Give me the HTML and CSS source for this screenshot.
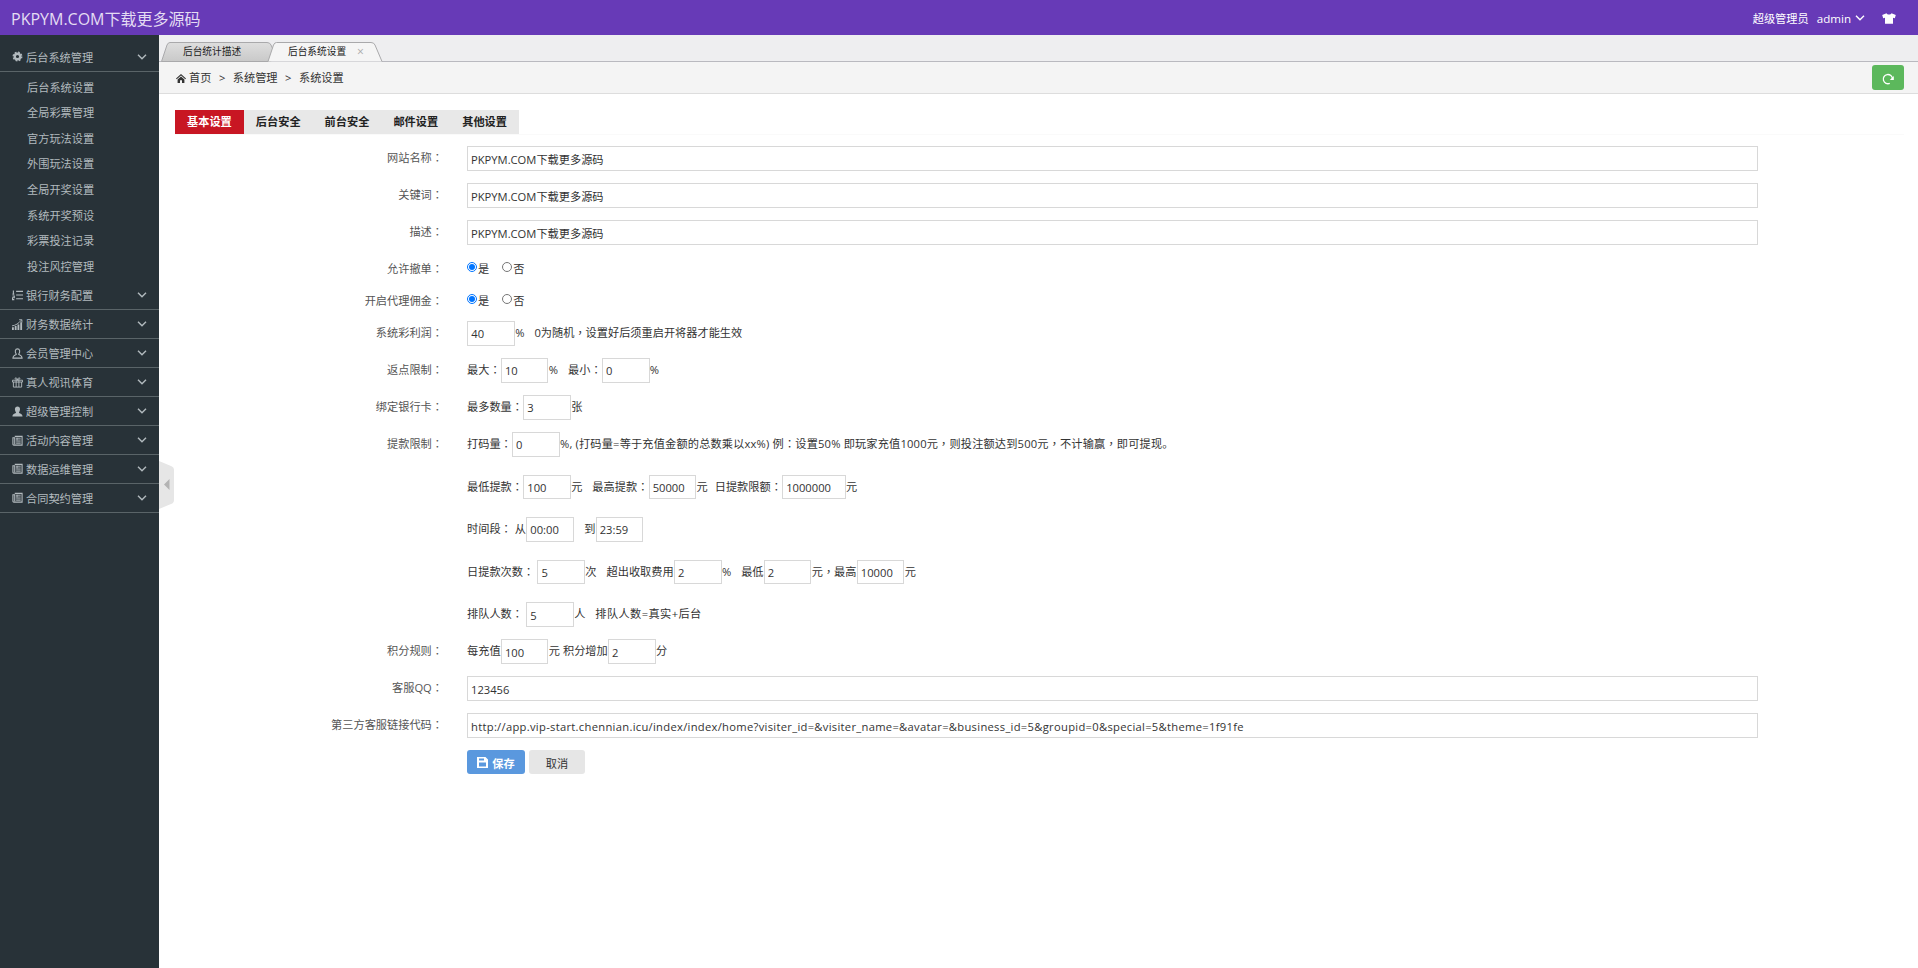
FILE: index.html
```html
<!DOCTYPE html>
<html lang="zh-CN">
<head>
    <meta charset="UTF-8">
    <meta name="viewport" content="width=device-width, initial-scale=1.0">
    <title>后台系统设置</title>
    <link rel="stylesheet" href="styles.css">
</head>
<body>
    <!-- shared icons -->
    <svg class="sprite">
        <symbol id="i-down" viewBox="0 0 10 6"><path d="M1 .8l4 4 4-4" fill="none" stroke="currentColor" stroke-width="1.4"/></symbol>
        <symbol id="i-news" viewBox="0 0 12 12"><path fill="none" stroke="currentColor" stroke-width="1.200" d="M3 1.500h8v9.500H2a1 1 0 0 1-1-1V3h2v7"/><path stroke="currentColor" d="M4.500 3.500h5M4.500 5.500h5M4.500 7.500h5M4.500 9h5M5.500 3v3"/></symbol>
    </svg>

    <header class="header">
        <div class="logo">PKPYM.COM下载更多源码</div>
        <div class="user">
            <span>超级管理员</span>
            <span class="name">admin</span>
            <svg class="down"><use href="#i-down"/></svg>
            <svg class="skin" viewBox="0 0 14 11"><path fill="#fff" d="M4.500.3C5 2 9 2 9.500.3L13.800 2l-1 3.300-1.800-.6V10.700H3V4.700l-1.800.6L.2 2z"/></svg>
        </div>
    </header>

    <div class="wrap">
        <aside class="sidebar">
            <div class="menu-title first">
                <svg class="icon" viewBox="0 0 12 12"><circle cx="6" cy="6" r="3" fill="none" stroke="currentColor" stroke-width="2.500"/><circle cx="6" cy="6" r="4.700" fill="none" stroke="currentColor" stroke-width="1.400" stroke-dasharray="2 1.690"/></svg>
                后台系统管理<svg class="down"><use href="#i-down"/></svg>
            </div>
            <ul class="submenu">
                <li>后台系统设置</li>
                <li>全局彩票管理</li>
                <li>官方玩法设置</li>
                <li>外围玩法设置</li>
                <li>全局开奖设置</li>
                <li>系统开奖预设</li>
                <li>彩票投注记录</li>
                <li>投注风控管理</li>
            </ul>
            <div class="menu-title">
                <svg class="icon" viewBox="0 0 12 12"><path stroke="currentColor" stroke-width="1.200" fill="none" d="M1.500.5v4M.5 4.500h2M.5 6.500h2v2h-2v2h2M4.500 1.500H12M4.500 5.500H12M4.500 9.500H12"/></svg>
                银行财务配置<svg class="down"><use href="#i-down"/></svg>
            </div>
            <div class="menu-title">
                <svg class="icon" viewBox="0 0 12 12"><path fill="currentColor" d="M0 9h2v3H0zM3 7.500h2V12H3zM6 6h2v6H6zM9 3.500h2V12H9z"/><path fill="none" stroke="currentColor" d="M0 7.500C4 7 7 5 10.500 1M7.800.8h3v3"/></svg>
                财务数据统计<svg class="down"><use href="#i-down"/></svg>
            </div>
            <div class="menu-title">
                <svg class="icon" viewBox="0 0 12 12"><path fill="none" stroke="currentColor" stroke-width="1.200" d="M4.700 6.800C2.700 4 3.500 1 6 1s3.300 3 1.300 5.800c.4 1.200 3.700.9 3.700 4.200H1c0-3.300 3.300-3 3.700-4.200z"/></svg>
                会员管理中心<svg class="down"><use href="#i-down"/></svg>
            </div>
            <div class="menu-title">
                <svg class="icon" viewBox="0 0 12 12"><path fill="none" stroke="currentColor" d="M.5 3.500h11v2H.5zM1.500 5.500v5.500h9V5.500M4.500 3.500V11M7.500 3.500V11M6 3.300C3 3 3 .8 4.200.8S6 3.300 6 3.300 6.600.8 7.800.8 9 3 6 3.300"/></svg>
                真人视讯体育<svg class="down"><use href="#i-down"/></svg>
            </div>
            <div class="menu-title">
                <svg class="icon" viewBox="0 0 12 12"><path fill="currentColor" d="M4.500 7C2.300 4 3 .5 6 .5S9.700 4 7.500 7c.4 1.200 4 .9 4 4.500H.5C.5 7.900 4.100 8.200 4.500 7z"/></svg>
                超级管理控制<svg class="down"><use href="#i-down"/></svg>
            </div>
            <div class="menu-title"><svg class="icon"><use href="#i-news"/></svg>活动内容管理<svg class="down"><use href="#i-down"/></svg></div>
            <div class="menu-title"><svg class="icon"><use href="#i-news"/></svg>数据运维管理<svg class="down"><use href="#i-down"/></svg></div>
            <div class="menu-title"><svg class="icon"><use href="#i-news"/></svg>合同契约管理<svg class="down"><use href="#i-down"/></svg></div>
            <!-- collapse handle over the content edge -->
            <svg class="handle" viewBox="0 0 15 48"><path fill="#e6e6e6" d="M0 0l12 5q3 1 3 4v30q0 3-3 4L0 48z"/><path fill="#b3b3b3" d="M10.500 18v11L5 23.500z"/></svg>
        </aside>

        <main class="main">
            <div class="tabs">
                <svg class="tab-shape" viewBox="0 0 222 20">
                    <defs><linearGradient id="tg" x2="0" y2="1"><stop offset="0" stop-color="#dedede"/><stop offset="1" stop-color="#c9c9c9"/></linearGradient></defs>
                    <path fill="url(#tg)" stroke="#a9a9ab" d="M.5 19.500L6 3q1-2.500 3-2.500h97q3 0 4 2.500l4 9-4 7.500z"/>
                    <path fill="#f5f5f5" stroke="#a9a9ab" d="M107 19.500L112.500 3q1-2.500 3-2.500H210q3 0 4 2.500l7 16.500"/>
                </svg>
                <span class="tab one">后台统计描述</span>
                <span class="tab two">后台系统设置</span>
                <span class="close">×</span>
            </div>

            <div class="crumb">
                <svg class="home" viewBox="0 0 10 9"><path fill="#333" d="M5 0l5 4.600-.7.700L5 1.500.7 5.300 0 4.600zM5 2.400l3.400 3V9H6V6.200H4V9H1.600V5.400z"/></svg>
                <span>首页</span><i>&gt;</i><span>系统管理</span><i>&gt;</i><span>系统设置</span>
                <button class="refresh"><svg viewBox="0 0 12 12"><path fill="none" stroke="#fff" stroke-width="1.300" d="M7.800 10.300A4.600 4.600 0 1 1 10.500 6"/><path fill="#fff" d="M11.800 3v4H7.800z"/></svg></button>
            </div>

            <div class="nav">
                <span class="active">基本设置</span><span>后台安全</span><span>前台安全</span><span>邮件设置</span><span>其他设置</span>
            </div>

            <form class="form">
                <div class="row"><label>网站名称<b>：</b></label><input class="full cn" value="PKPYM.COM下载更多源码"></div>
                <div class="row"><label>关键词<b>：</b></label><input class="full cn" value="PKPYM.COM下载更多源码"></div>
                <div class="row"><label>描述<b>：</b></label><input class="full cn" value="PKPYM.COM下载更多源码"></div>
                <div class="row radio-row"><label>允许撤单<b>：</b></label><input type="radio" name="cancel" checked><span>是</span><input type="radio" name="cancel"><span>否</span></div>
                <div class="row radio-row"><label>开启代理佣金<b>：</b></label><input type="radio" name="agent" checked><span>是</span><input type="radio" name="agent"><span>否</span></div>
                <div class="row"><label>系统彩利润<b>：</b></label><input value="40"><span>%</span><span class="sp">0为随机<b>，</b>设置好后须重启开将器才能生效</span></div>
                <div class="row"><label>返点限制<b>：</b></label><span>最大<b>：</b></span><input value="10"><span>%</span><span class="sp">最小<b>：</b></span><input value="0"><span>%</span></div>
                <div class="row"><label>绑定银行卡<b>：</b></label><span>最多数量<b>：</b></span><input value="3"><span>张</span></div>
                <div class="row tall"><label>提款限制<b>：</b></label><span>打码量<b>：</b></span><input value="0"><span class="tip">%, (打码量=等于充值金额的总数乘以xx%) 例<b>：</b>设置50% 即玩家充值1000元<b>，</b>则投注额达到500元<b>，</b>不计输赢<b>，</b>即可提现。</span></div>
                <div class="row tall"><label></label><span>最低提款<b>：</b></span><input value="100"><span>元</span><span class="sp">最高提款<b>：</b></span><input value="50000"><span>元</span><span class="sp mid">日提款限额<b>：</b></span><input class="wide" value="1000000"><span>元</span></div>
                <div class="row tall"><label></label><span>时间段<b>：</b></span><span class="sp small">从</span><input value="00:00"><span class="sp">到</span><input value="23:59"></div>
                <div class="row tall"><label></label><span class="pr">日提款次数<b>：</b></span><input value="5"><span>次</span><span class="sp">超出收取费用</span><input value="2"><span>%</span><span class="sp">最低</span><input value="2"><span>元<b>，</b>最高</span><input value="10000"><span>元</span></div>
                <div class="row"><label></label><span class="pr">排队人数<b>：</b></span><input value="5"><span>人</span><span class="sp queue">排队人数=真实+后台</span></div>
                <div class="row"><label>积分规则<b>：</b></label><span>每充值</span><input value="100"><span>元</span><span class="sp small">积分增加</span><input value="2"><span>分</span></div>
                <div class="row"><label>客服QQ<b>：</b></label><input class="full" value="123456"></div>
                <div class="row"><label>第三方客服链接代码<b>：</b></label><input class="full link" value="http://app.vip-start.chennian.icu/index/index/home?visiter_id=&amp;visiter_name=&amp;avatar=&amp;business_id=5&amp;groupid=0&amp;special=5&amp;theme=1f91fe"></div>
                <div class="row">
                    <label></label>
                    <button type="button" class="btn save"><svg viewBox="0 0 11 11"><path fill="#fff" fill-rule="evenodd" d="M0 0h8.500L11 2.500V11H0zM2 5.500v4h7v-4zM2 1.500v2h5v-2z"/></svg>保存</button>
                    <button type="button" class="btn cancel">取消</button>
                </div>
            </form>
        </main>
    </div>
</body>
</html>
```
FILE: styles.css
```css
* {
    box-sizing: border-box;
}
body {
    margin: 0;
    height: 968px;
    overflow: hidden;
    font-family: "Open Sans", "Noto Sans CJK SC", sans-serif;
    font-size: 11.2px;
    color: #333;
    background: #fff;
}
input, button {
    font-family: inherit;
    font-size: inherit;
    margin: 0;
}
svg {
    display: block;
    flex: none;
}
.sprite {
    display: none;
}

/* header */
.header {
    height: 35px;
    background: #673ab7;
    display: flex;
    justify-content: space-between;
    align-items: center;
    padding: 0 22px 0 11px;
    color: #fff;
}
.logo {
    font-size: 16px;
    color: #e4dcf3;
}
.user {
    display: flex;
    align-items: center;
    padding-top: 1px;
}
.name {
    margin: 0 4px 0 8px;
    font-size: 11.6px;
}
.down {
    width: 10px;
    height: 6px;
}
.skin {
    width: 14px;
    height: 11px;
    margin-left: 17px;
}

/* left menu */
.wrap {
    display: flex;
    height: 933px;
}
.sidebar {
    position: relative;
    width: 159px;
    flex: none;
    background: #283238;
    color: #b2babe;
    padding-top: 7.6px;
}
.menu-title {
    display: flex;
    align-items: center;
    height: 28.96px;
    padding: 0 12px;
    border-bottom: 1px solid #5a6468;
}
.menu-title .icon {
    width: 11px;
    height: 11px;
    margin-right: 3px;
}
.menu-title .down {
    margin-left: auto;
}
.submenu {
    list-style: none;
    margin: 0;
    padding: 3px 0 2px 27px;
}
.submenu li {
    height: 25.6px;
    line-height: 25.6px;
}
.handle {
    position: absolute;
    left: 159px;
    top: 426px;
    width: 15px;
    height: 48px;
}

/* page tabs */
.main {
    flex: 1;
}
.tabs {
    position: relative;
    height: 27px;
    background: #eeeef0;
    border-bottom: 1px solid #b9b9bf;
}
.tab-shape {
    position: absolute;
    left: 2px;
    top: 7px;
    width: 222px;
    height: 20px;
}
.tab, .close {
    position: absolute;
    top: 9px;
    line-height: 16px;
    font-size: 9.7px;
    color: #222;
}
.tab.one {
    left: 24px;
}
.tab.two {
    left: 129px;
}
.close {
    left: 198px;
    font-size: 12px;
    color: #aaa;
}

.crumb {
    display: flex;
    align-items: center;
    height: 32px;
    padding: 0 14px 1px 17px;
    background: #f4f4f4;
    border-bottom: 1px solid #ddd;
}
.home {
    width: 10px;
    height: 9px;
    margin: 2px 3px 0 0;
}
.crumb i {
    font-style: normal;
    width: 21.4px;
    text-align: center;
}
.refresh {
    width: 32px;
    height: 25px;
    margin-left: auto;
    border: 0;
    border-radius: 3px;
    background: #5cb85c;
    padding: 4px 0 0 10px;
}
.refresh svg {
    width: 12px;
    height: 12px;
}

/* setting tabs */
.nav {
    display: flex;
    margin: 16px 14px 0 16px;
    border-bottom: 1px solid #fafafa;
}
.nav span {
    width: 68.8px;
    height: 24px;
    line-height: 24px;
    text-align: center;
    font-weight: bold;
    color: #222;
    background: #e8e8e8;
}
.nav .active {
    background: #c81623;
    color: #fff;
}

/* form */
.form {
    padding: 11px 160px 0 0;
}
.row {
    display: flex;
    height: 37px;
    line-height: 23px;
    white-space: pre;
}
.row.tall {
    height: 42.6px;
}
.row label {
    width: 284px;
    margin-right: 24px;
    text-align: right;
    color: #555;
}
.row b {
    font-weight: normal;
}
/* full-width punctuation sits in the middle of its box */
.row b {
    font-family: "Noto Sans CJK TC", sans-serif;
    -webkit-locale: "zh-TW";
}
.row input {
    width: 47.6px;
    height: 24.6px;
    margin: 0 .3px;
    padding: 1px 3px 0;
    border: 1px solid #d8d8d8;
    background: #fff;
    color: #333;
    outline: none;
}
.row .full {
    flex: 1;
    margin: 0;
}
.row .cn {
    padding-top: 2px;
}
.row .link {
    letter-spacing: .3px;
}
.row .wide {
    width: 63.6px;
}
.sp {
    margin-left: 10px;
}
.sp.mid {
    margin-left: 7px;
}
.sp.small {
    margin-left: 3px;
}
.pr {
    padding-right: 3px;
}
.tip {
    letter-spacing: .17px;
}
.queue {
    letter-spacing: .4px;
}
.radio-row {
    height: 32px;
}
.row.radio-row input {
    width: 10px;
    height: 10px;
    margin: 5px 1px 0 0;
}
.row.radio-row span + input {
    margin-left: 13px;
}

.btn {
    height: 24px;
    border: 0;
    border-radius: 3px;
    display: flex;
    align-items: center;
    justify-content: center;
    padding-top: 2px;
}
.save {
    width: 58px;
    color: #fff;
    background: #5a98de;
    font-weight: bold;
}
.save svg {
    width: 11px;
    height: 11px;
    margin-right: 4px;
}
.cancel {
    width: 56px;
    margin-left: 4px;
    background: #e6e6e6;
    color: #333;
}
```
